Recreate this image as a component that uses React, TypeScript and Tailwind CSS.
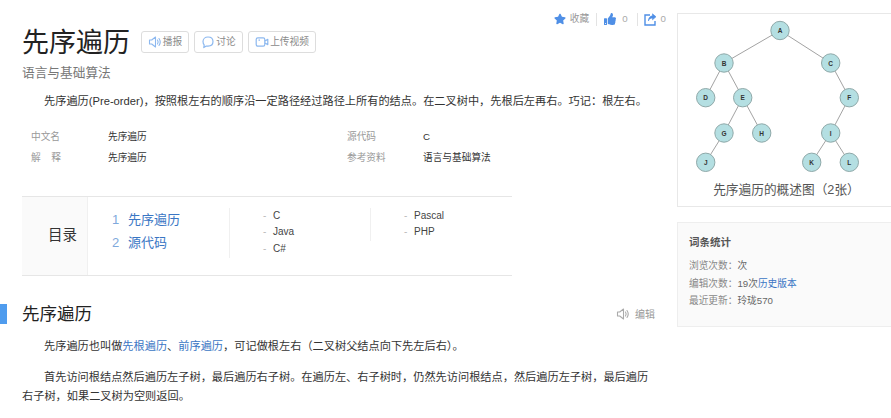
import React from "react";
import { FaStar, FaThumbsUp } from "react-icons/fa";

const FONT = '"Liberation Sans", "Noto Sans CJK SC", sans-serif';

const Speaker = ({ c = "#8cb8ef", s = 14 }: { c?: string; s?: number }) => (
  <svg width={s} height={s} viewBox="0 0 14 14" fill="none" stroke={c} strokeWidth="1.1">
    <path d="M1.5 5h2.2L7.5 2v10L3.7 9H1.5z" strokeLinejoin="round" />
    <path d="M9.5 5c.8 1.2.8 2.8 0 4" strokeLinecap="round" />
    <path d="M11 3.5c1.4 2 1.4 5 0 7" strokeLinecap="round" />
  </svg>
);
const Bubble = () => (
  <svg width="14" height="14" viewBox="0 0 14 14" fill="none" stroke="#8cb8ef" strokeWidth="1.2">
    <path d="M7 2c3 0 5 2 5 4.6s-2 4.6-5 4.6c-.6 0-1.2-.1-1.7-.2L2.8 12.6l.4-2.7C2.3 9 2 7.9 2 6.6 2 4 4 2 7 2z" strokeLinejoin="round" />
  </svg>
);
const Cam = () => (
  <svg width="14" height="14" viewBox="0 0 14 14" fill="none" stroke="#8cb8ef" strokeWidth="1.2">
    <rect x="1.2" y="2.8" width="8.6" height="8.4" rx="1.6" />
    <path d="M9.8 6l3-1.6v5.2l-3-1.6" strokeLinejoin="round" />
    <path d="M3.5 5.2h1.5" />
  </svg>
);
const Share = () => (
  <svg width="13" height="13" viewBox="0 0 13 13" fill="none" stroke="#4f8fe6" strokeWidth="1.4">
    <path d="M6 2H1v10h10V8" />
    <path d="M8.5 .8L12 3.8 8.5 6.8V5C6.5 5 5 6 4.4 8c0-3 1.6-5 4.1-5.2z" fill="#4f8fe6" strokeWidth="0.6" />
  </svg>
);

const nodes: [string, number, number][] = [
  ["A", 102, 16.5], ["B", 46, 49], ["C", 152.7, 49], ["D", 27.7, 83.7], ["E", 64.7, 83.7], ["F", 171.3, 83.7],
  ["G", 46, 119], ["H", 83.7, 119], ["I", 152.7, 119], ["J", 27.7, 148.3], ["K", 133.7, 148.3], ["L", 171.3, 148.3],
];
const edges = [["A","B"],["A","C"],["B","D"],["B","E"],["C","F"],["E","G"],["E","H"],["F","I"],["G","J"],["I","K"],["I","L"]];
const pos = Object.fromEntries(nodes.map((n) => [n[0], n]));

const Tree = () => (
  <svg width="212" height="162" viewBox="0 0 212 162" className="block">
    {edges.map(([a, b]) => (
      <line key={a + b} x1={pos[a][1]} y1={pos[a][2]} x2={pos[b][1]} y2={pos[b][2]} stroke="#a3a3a3" strokeWidth="1" />
    ))}
    {nodes.map(([l, x, y]) => (
      <g key={l}>
        <circle cx={x} cy={y} r="9.2" fill="#b4dfe2" stroke="#8fa9a9" strokeWidth="1" />
        <text x={x} y={y + 2.5} textAnchor="middle" fontSize="6.5" fontWeight="700" fill="#333" fontFamily='"Liberation Sans", sans-serif'>{l}</text>
      </g>
    ))}
  </svg>
);

const TagBtn = ({ icon, label, w }: { icon: React.ReactNode; label: string; w: string }) => (
  <div className={`${w} h-[22px] flex items-center justify-center gap-[1px] border border-[#dddddd] rounded-[3px] text-[9.7px] text-[#8a8a8a]`}>
    {icon}
    <span>{label}</span>
  </div>
);

const Row = ({ a, b, c, d, mt }: { a: React.ReactNode; b: string; c: string; d: string; mt?: string }) => (
  <div className={`flex items-center h-[14px] text-[9.7px] ${mt ?? ""}`}>
    <div className="w-[77px] text-[#999999]">{a}</div>
    <div className="w-[239px] text-[#333333]">{b}</div>
    <div className="w-[76px] text-[#999999]">{c}</div>
    <div className="text-[#333333]">{d}</div>
  </div>
);

const Sub = ({ t }: { t: string }) => (
  <div className="flex items-center h-[16.5px] pb-[2px] text-[10px] text-[#444444]">
    <span className="w-[10px] text-[#bbbbbb]">-</span>
    <span>{t}</span>
  </div>
);

export default function App() {
  return (
    <div className="w-[891px] h-[418px] overflow-hidden flex bg-white text-[#333333]" style={{ fontFamily: FONT }}>
      <main className="w-[677px] shrink-0 pl-[22px] pr-[22px]">
        <header className="flex justify-between items-start h-[93px] -mr-[11px]">
          <div className="pt-[24px]">
            <div className="flex items-center gap-[10px] h-[36px]">
              <h1 className="text-[27px] leading-[36px] text-[#222222] mr-[1px] pt-[1px]">先序遍历</h1>
              <div className="flex gap-[5px]">
                <TagBtn w="w-[48px]" icon={<Speaker />} label="播报" />
                <TagBtn w="w-[49px]" icon={<Bubble />} label="讨论" />
                <TagBtn w="w-[68px]" icon={<Cam />} label="上传视频" />
              </div>
            </div>
            <div className="mt-[4px] text-[12.7px] leading-[18px] text-[#777777]">语言与基础算法</div>
          </div>
          <div className="flex items-center h-[14px] mt-[12px] text-[9.7px] text-[#999999]">
            <FaStar size={12} color="#4f8fe6" />
            <span className="ml-[4px]">收藏</span>
            <span className="w-px h-[13px] bg-[#e3e3e3] mx-[7px]" />
            <FaThumbsUp size={12} color="#4f8fe6" />
            <span className="ml-[6px] text-[#aaaaaa]">0</span>
            <span className="w-px h-[13px] bg-[#e3e3e3] ml-[9px] mr-[6px]" />
            <Share />
            <span className="ml-[4px] text-[#aaaaaa]">0</span>
          </div>
        </header>

        <p className="text-[11.2px] leading-[17px] text-[#333333] indent-[22px] whitespace-nowrap">
          先序遍历(Pre-order)，按照根左右的顺序沿一定路径经过路径上所有的结点。在二叉树中，先根后左再右。巧记：根左右。
        </p>

        <section className="mt-[20px] pl-[9px]">
          <Row a="中文名" b="先序遍历" c="源代码" d="C" />
          <Row mt="mt-[7px]" a={<span className="flex w-[30px] justify-between"><span>解</span><span>释</span></span>} b="先序遍历" c="参考资料" d="语言与基础算法" />
        </section>

        <nav className="mt-[31px] w-[490px] h-[80px] border-y border-[#e6e6e6] flex">
          <div className="w-[66px] bg-[#fafafa] border-r border-[#f0f0f0] flex items-center justify-end pr-[10px] text-[14.5px] text-[#333333]">目录</div>
          <div className="flex pt-[11px]">
            <div className="w-[141px] pl-[24px]">
              <div className="flex items-center h-[23px] text-[13px]">
                <span className="w-[16px] text-[#7fa9dc]">1</span>
                <span className="text-[#3a76c4]">先序遍历</span>
              </div>
              <div className="flex items-center h-[23px] text-[13px]">
                <span className="w-[16px] text-[#7fa9dc]">2</span>
                <span className="text-[#3a76c4]">源代码</span>
              </div>
            </div>
            <div className="w-[141px] h-[50px] border-l border-[#f0f0f0] pl-[33px]">
              <Sub t="C" />
              <Sub t="Java" />
              <Sub t="C#" />
            </div>
            <div className="w-[120px] h-[33px] border-l border-[#f0f0f0] pl-[33px]">
              <Sub t="Pascal" />
              <Sub t="PHP" />
            </div>
          </div>
        </nav>

        <section className="mt-[28px] flex items-center h-[20px] justify-between">
          <div className="flex items-center">
            <span className="w-[7px] h-[20px] bg-[#4f9cee] -ml-[22px] mr-[15px]" />
            <h2 className="text-[17.5px] leading-[20px] text-[#222222]">先序遍历</h2>
          </div>
          <div className="flex items-center gap-[5px] text-[10px] text-[#999999]">
            <Speaker c="#aaaaaa" />
            <span>编辑</span>
          </div>
        </section>

        <div className="text-[11.2px] leading-[19px] text-[#333333] mt-[13px]">
          <p className="indent-[22px]">
            先序遍历也叫做<span className="text-[#3a76c4]">先根遍历</span>、<span className="text-[#3a76c4]">前序遍历</span>，可记做根左右（二叉树父结点向下先左后右）。
          </p>
          <p className="indent-[22px] mt-[12px]">
            首先访问根结点然后遍历左子树，最后遍历右子树。在遍历左、右子树时，仍然先访问根结点，然后遍历左子树，最后遍历右子树，如果二叉树为空则返回。
          </p>
        </div>
      </main>

      <aside className="w-[214px] shrink-0 pt-[13px]">
        <div className="h-[194px] border border-[#e8e8e8] border-r-0">
          <Tree />
          <div className="text-center text-[12.7px] leading-[18px] text-[#555555] mt-[5px] pl-[4px]">先序遍历的概述图（2张）</div>
        </div>
        <div className="mt-[15px] h-[105px] bg-[#fafafa] border border-[#eeeeee] border-r-0 pl-[11px] pt-[12px]">
          <div className="text-[10.5px] leading-[14px] font-bold text-[#555555]">词条统计</div>
          <div className="mt-[8px] text-[9.7px] leading-[17.5px] text-[#888888]">
            <div>浏览次数：<span className="text-[#666666]">次</span></div>
            <div>编辑次数：<span className="text-[#666666]">19次</span><span className="text-[#3a76c4]">历史版本</span></div>
            <div>最近更新：<span className="text-[#666666]">玲珑570</span></div>
          </div>
        </div>
      </aside>
    </div>
  );
}
